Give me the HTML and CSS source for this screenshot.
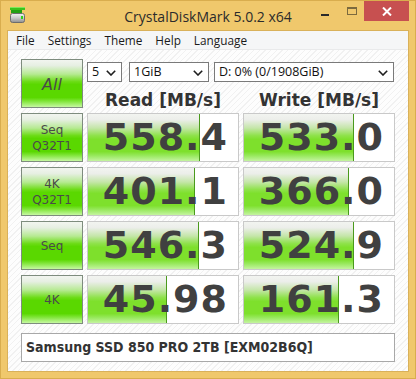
FILE: index.html
```html
<!DOCTYPE html>
<html>
<head>
<meta charset="utf-8">
<title>CrystalDiskMark 5.0.2 x64</title>
<link rel="stylesheet" href="styles.css">
</head>
<body>
<div class="window">
  <div class="titlebar">
    <div class="tb-left">
      <svg class="app-icon" width="16" height="17" viewBox="0 0 16 17">
        <rect x="0" y="0" width="15" height="3" fill="#3cc21c"/>
        <rect x="0" y="0" width="15" height="1" fill="#7ee85a"/>
        <rect x="1" y="3" width="11" height="3" fill="#22a012"/>
        <rect x="0.5" y="6.5" width="14" height="9" rx="2" fill="url(#disk)" stroke="#6d6d6d"/>
        <rect x="11" y="9" width="2" height="3" fill="#2ed41a"/>
        <defs>
          <linearGradient id="disk" x1="0" y1="0" x2="0" y2="1">
            <stop offset="0" stop-color="#f2f2f2"/>
            <stop offset="0.5" stop-color="#c9c9c9"/>
            <stop offset="1" stop-color="#8e8e8e"/>
          </linearGradient>
        </defs>
      </svg>
    </div>
    <div class="title">CrystalDiskMark 5.0.2 x64</div>
    <div class="controls">
      <div class="ctl"><span class="min-dash"></span></div>
      <div class="ctl"><span class="max-box"></span></div>
      <div class="ctl close">
        <svg width="10" height="9" viewBox="0 0 10 9"><path d="M1 0.5 L9 8.5 M9 0.5 L1 8.5" stroke="#fff" stroke-width="2"/></svg>
      </div>
    </div>
  </div>
  <div class="client">
    <div class="menubar">
      <span class="menu-item">File</span>
      <span class="menu-item">Settings</span>
      <span class="menu-item">Theme</span>
      <span class="menu-item">Help</span>
      <span class="menu-item">Language</span>
    </div>
    <div class="content">
      <div class="grid">
        <div class="btn btn-all">All</div>
        <div class="top">
          <div class="selects">
            <div class="select s-count"><span>5</span><svg class="chev" width="10" height="6" viewBox="0 0 10 6"><path d="M0.8 0.8 L5 5 L9.2 0.8" fill="none" stroke="#1e1e1e" stroke-width="1.6"/></svg></div>
            <div class="select s-size"><span>1GiB</span><svg class="chev" width="10" height="6" viewBox="0 0 10 6"><path d="M0.8 0.8 L5 5 L9.2 0.8" fill="none" stroke="#1e1e1e" stroke-width="1.6"/></svg></div>
            <div class="select s-drive"><span>D: 0% (0/1908GiB)</span><svg class="chev" width="10" height="6" viewBox="0 0 10 6"><path d="M0.8 0.8 L5 5 L9.2 0.8" fill="none" stroke="#1e1e1e" stroke-width="1.6"/></svg></div>
          </div>
          <div class="headers">
            <div class="hdr">Read [MB/s]</div>
            <div class="hdr">Write [MB/s]</div>
          </div>
        </div>

        <div class="btn btn-test"><span>Seq</span><span>Q32T1</span></div>
        <div class="val" style="--w:112px">558.4</div>
        <div class="val" style="--w:110px">533.0</div>

        <div class="btn btn-test"><span>4K</span><span>Q32T1</span></div>
        <div class="val" style="--w:107px">401.1</div>
        <div class="val" style="--w:105px">366.0</div>

        <div class="btn btn-test"><span>Seq</span></div>
        <div class="val" style="--w:111px">546.3</div>
        <div class="val" style="--w:110px">524.9</div>

        <div class="btn btn-test"><span>4K</span></div>
        <div class="val" style="--w:79px">45.98</div>
        <div class="val" style="--w:95px">161.3</div>
      </div>
      <div class="info">Samsung SSD 850 PRO 2TB [EXM02B6Q]</div>
    </div>
  </div>
</div>
</body>
</html>
```

FILE: styles.css
```css
* { box-sizing: border-box; }

html, body {
  margin: 0;
  padding: 0;
  width: 416px;
  height: 379px;
  overflow: hidden;
}

.window {
  width: 416px;
  height: 379px;
  background: #f0c86c;
  border: 1px solid #d9ad4e;
  display: flex;
  flex-direction: column;
  padding: 0 6px 6px 6px;
}

.titlebar {
  height: 29px;
  display: grid;
  grid-template-columns: 1fr auto 1fr;
  align-items: stretch;
  margin: 0 -6px 0 -6px;
}

.tb-left {
  padding: 6px 0 0 9px;
}

.app-icon { display: block; }

.title {
  font-family: "Open Sans", "Noto Sans", sans-serif;
  font-size: 14px;
  color: #2b2b2b;
  display: flex;
  align-items: center;
  padding-top: 1px;
}

.controls {
  display: flex;
  justify-content: flex-end;
  align-items: flex-start;
  padding-right: 6px;
}

.ctl {
  width: 26px;
  height: 20px;
  display: flex;
  align-items: center;
  justify-content: center;
}

.min-dash {
  width: 8px;
  height: 2px;
  background: #2a2a2a;
  margin-top: 7px;
}

.max-box {
  width: 10px;
  height: 8px;
  border: 1px solid #7c6a3e;
  border-top-width: 2px;
  margin-top: -1px;
  margin-left: 2px;
}

.ctl.close {
  width: 45px;
  height: 20px;
  background: #c75050;
}
.ctl.close svg { display: block; }

.client {
  flex: 1;
  border: 1px solid #d9b15a;
  background-color: #fcfcfc;
  background-image: repeating-linear-gradient(135deg, #fdfdfd 0px, #fdfdfd 3px, #f1f1f1 3px, #f1f1f1 4px);
  display: flex;
  flex-direction: column;
}

.menubar {
  height: 19px;
  background: #f5f6f7;
  border-bottom: 1px solid #e9eaeb;
  display: flex;
  align-items: center;
  padding-left: 1.5px;
  font-family: "Open Sans", "Noto Sans", sans-serif;
  font-size: 11.8px;
  color: #1a1a1a;
}

.menu-item {
  padding: 0 6.5px;
  line-height: 18px;
}

.content {
  padding: 9px 13px 0 13px;
}

.grid {
  display: grid;
  grid-template-columns: 62px 152px 152px;
  grid-auto-rows: 49px;
  column-gap: 4px;
  row-gap: 5px;
}

.btn {
  border: 1px solid #7e8c7e;
  background: linear-gradient(to bottom,
    #f2f5f0 0%, #e6efe2 12%, #b6ea92 30%, #6cdc16 46%,
    #5ad800 52%, #5ad800 80%, #82e63c 88%, #c6f8a2 100%);
  color: #4a4a4a;
  font-family: "DejaVu Sans", sans-serif;
  display: flex;
  flex-direction: column;
  align-items: center;
  justify-content: center;
}

.btn-all {
  font-size: 16px;
  font-style: italic;
  padding-top: 1px;
}

.btn-test {
  font-size: 12px;
  line-height: 16px;
  padding-top: 1px;
}

.top {
  grid-column: 2 / 4;
  display: flex;
  flex-direction: column;
}

.selects {
  display: flex;
  margin-top: 3px;
  height: 20px;
}

.select {
  height: 20px;
  border: 1px solid #7a7a7a;
  background: #fff;
  display: flex;
  align-items: center;
  justify-content: space-between;
  padding: 0 5px 0 4px;
  font-family: "Open Sans", "Noto Sans", sans-serif;
  font-size: 12.5px;
  color: #111;
}
.select span { line-height: 18px; }
.chev { display: block; margin-top: 1px; }

.s-count { width: 35px; }
.s-size { width: 80px; margin-left: 7px; }
.s-drive { width: 180px; margin-left: 5px; }

.headers {
  display: grid;
  grid-template-columns: 152px 152px;
  column-gap: 4px;
  margin-top: 8px;
}

.hdr {
  text-align: center;
  font-family: "DejaVu Sans", sans-serif;
  font-weight: bold;
  font-size: 17px;
  line-height: 20px;
  color: #333;
}

.val {
  border: 1px solid #c9c9c9;
  background:
    linear-gradient(#4a9a1c, #4a9a1c) no-repeat calc(var(--w) - 1px) 0 / 1px 100%,
    linear-gradient(to bottom,
      #f2f4f0 0%, #eceeea 12%, #c4e6a8 30%, #8ee24a 46%,
      #7ee02c 54%, #7ee02c 80%, #96e85a 88%, #c4f4a0 100%) no-repeat 0 0 / var(--w) 100%,
    #fff;
  font-family: "DejaVu Sans", sans-serif;
  font-weight: bold;
  font-size: 38px;
  line-height: 47px;
  color: #404040;
  text-align: right;
  padding-right: 10px;
  letter-spacing: 1px;
}

.info {
  margin-top: 9px;
  width: 374px;
  height: 29px;
  border: 1px solid #a8a8a8;
  background: #fff;
  font-family: "DejaVu Sans Condensed", "DejaVu Sans", sans-serif;
  font-stretch: condensed;
  font-weight: bold;
  font-size: 14px;
  line-height: 27px;
  color: #333;
  padding-left: 4px;
}
```
